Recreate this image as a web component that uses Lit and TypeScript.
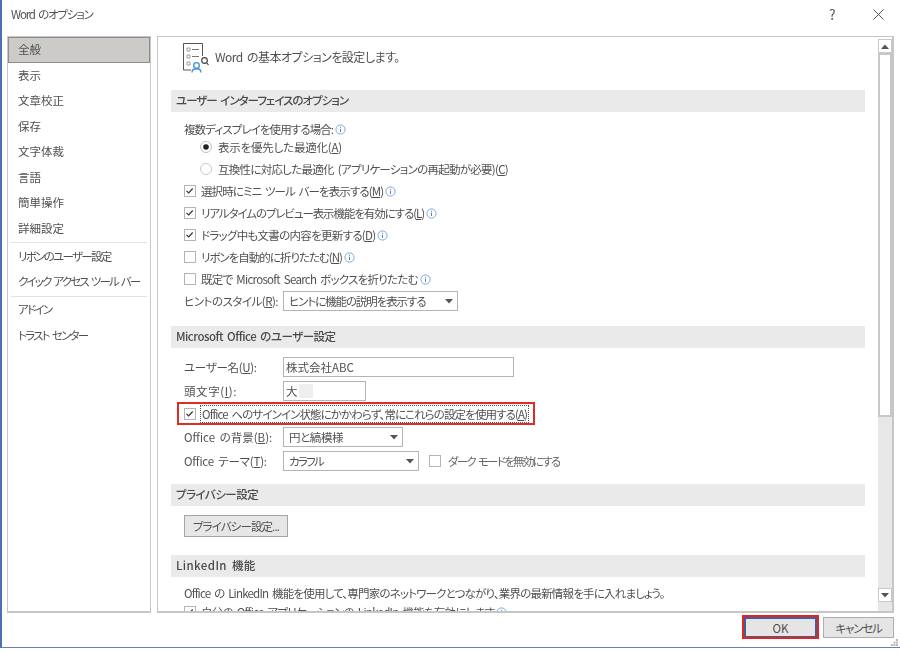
import { LitElement, html, css, svg } from "lit";
import { customElement } from "lit/decorators.js";

const info = html`<svg class="info" viewBox="0 0 11 11" width="11" height="11"><circle cx="5.5" cy="5.5" r="4.6" fill="none" stroke="#7ba7d6" stroke-width="1"/><path d="M5.5 2.800v1M5.500 4.800v3.200" stroke="#4d7fb8" stroke-width="1"/></svg>`;
const check = svg`<path d="M2.500 5.800l2.200 2.200 4-4.500" fill="none" stroke="#333" stroke-width="1.200"/>`;
const box = (on: boolean) => html`<svg class="box" viewBox="0 0 12 12" width="12" height="12"><rect x=".5" y=".5" width="11" height="11" fill="#fff" stroke="#b4b4b4"/>${on ? check : ""}</svg>`;
const caret = html`<svg class="caret" viewBox="0 0 8 5" width="8" height="5"><path d="M0 0h8L4 4.500z" fill="#555"/></svg>`;

@customElement("app-root")
export class AppRoot extends LitElement {
  static styles = css`
    :host { display: block; width: 900px; height: 653px; background: #fff; overflow: hidden; font-family: "Noto Sans CJK JP", "Liberation Sans", sans-serif; font-size: 11.5px; color: #505050; font-feature-settings: "palt" 1; word-spacing: 2px; }
    * { box-sizing: border-box; }
    .dialog { position: relative; height: 648px; border-left: 2px solid #4a72b0; border-bottom: 1.5px solid #5f82b8; display: flex; flex-direction: column; filter: blur(.25px); }
    .title { height: 36px; flex: none; display: flex; align-items: center; padding: 0 16px 0 9px; font-size: 11.5px; }
    .title .t { flex: 1; padding-bottom: 8px; }
    .help { font-size: 14px; width: 44px; padding-bottom: 8px; color: #555; }
    .close { margin-bottom: 8px; }
    .main { height: 577px; flex: none; display: flex; gap: 6px; padding-left: 5px; }
    .nav { width: 144px; border: 1px solid #c6c6c6; border-bottom-width: 2px; white-space: nowrap; }
    .nav div.item { height: 25.5px; display: flex; align-items: center; padding: 0 0 1px 10px; }
    .nav .sel { background: #cdcbc8; border: 1px solid #8d8d8d; width: 142px; padding-left: 9px !important; }
    .nav hr { border: 0; height: 1px; background: #e2e2e2; margin: 1px 3px .5px 3px; }
    .panel { width: 737px; border: 1px solid #c6c6c6; border-bottom-width: 2px; border-right-width: 2px; display: flex; overflow: hidden; }
    .content { width: 720px; flex: none; padding: 0 0 0 13px; overflow: hidden; height: 100%; }
    .head { height: 53px; display: flex; align-items: flex-start; padding: 6px 0 0 12px; gap: 6px; font-size: 12px; }
    .head span { margin-top: 5px; }
    .band { width: 694px; height: 22px; background: #eaeaea; display: flex; align-items: center; padding: 0 0 2px 5px; font-weight: 500; font-size: 11.5px; color: #4a4a4a; }
    .row { display: flex; align-items: center; padding-left: 13px; white-space: nowrap; }
    .h22 { height: 22px; } .h18 { height: 18px; }
    .row .box { margin-right: 5px; flex: none; }
    .info { margin-left: 2px; flex: none; }
    .radio { padding-left: 29px; }
    .radio svg { margin-right: 6px; flex: none; }
    .lab { width: 99px; flex: none; }
    .field { border: 1px solid #b4b4b4; height: 20px; display: flex; align-items: center; padding: 0 2px; background: #fff; justify-content: space-between; }
    .field.dd { padding: 0 4px 0 5px; }
    .field.start { justify-content: flex-start; }
    u { text-underline-offset: 1px; }
    .mask { display: inline-block; width: 14px; height: 14px; background: #efefef; margin-left: 1px; }
    .focus { outline: 1px dotted #555; padding: 0 1px; line-height: 16px; }
    .redrow { position: relative; height: 23px; margin-bottom: 1px; }
    .redbox { position: absolute; left: 6px; top: 0; width: 358px; height: 23px; border: 2px solid #e12b25; pointer-events: none; }
    .pbtn { display: flex; align-items: center; justify-content: center; width: 104px; height: 22px; border: 1px solid #a6a6a6; background: #e6e6e6; margin: 9px 0 18px 13px; font-size: 11.5px; }
    .scroll { width: 14px; flex: none; display: flex; flex-direction: column; margin-top: 2px; padding-bottom: 9px; background: #e7e7e7; }
    .sb { height: 14px; flex: none; background: #fff; border: 1px solid #c8c8c8; display: flex; align-items: center; justify-content: center; }
    .thumb { height: 364px; flex: none; background: #fff; border: 2px solid #c8c8c8; }
    .track { flex: 1; }
    .foot { flex: 1; display: flex; justify-content: flex-end; align-items: flex-start; gap: 6px; padding: 4px 6px 0 0; }
    .btn { height: 21px; display: flex; align-items: center; justify-content: center; background: #e5e5e5; border: 1px solid #adadad; font-size: 11.5px; }
    .ok { width: 73px; border: 2px solid #3b5f9f; position: relative; }
    .okred { position: absolute; inset: -4px -4px -3px -4px; border: 2px solid #e8231c; }
    .cancel { width: 71px; }
    .up { transform: rotate(180deg); }
    .grip { position: absolute; right: 2px; bottom: 1px; }
    .dark { display: inline-flex; align-items: center; margin-left: 10px; }
    .dark .lbl { margin-left: 2px; color: #666; }
    .mt-3 { margin-top: -3px; } .mt2 { margin-top: 2px; } .mt5 { margin-top: 5px; } .mt8 { margin-top: 8px; } .mt12 { margin-top: 12px; } .mt14 { margin-top: 14px; }
    .w83 { width: 83px; } .w120 { width: 120px; } .w136 { width: 136px; } .w175 { width: 175px; } .w231 { width: 231px; }
    .n2 { letter-spacing: -.2px; } .n3 { letter-spacing: -.3px; } .n4 { letter-spacing: -.4px; } .n5 { letter-spacing: -.5px; } .n6 { letter-spacing: -.6px; } .n7 { letter-spacing: -.72px; } .n8 { letter-spacing: -.8px; } .n9 { letter-spacing: -.9px; } .n10 { letter-spacing: -1px; } .n11 { letter-spacing: -1.1px; } .n12 { letter-spacing: -1.2px; } .n13 { letter-spacing: -1.3px; } .n14 { letter-spacing: -1.4px; } .n17 { letter-spacing: -1.7px; } .n18 { letter-spacing: -1.8px; }
    .p4 { letter-spacing: .4px; } .p6 { letter-spacing: .6px; }
  `;

  render() {
    return html`<div class="dialog">
      <div class="title"><span class="t n12">Word のオプション</span><span class="help">?</span>
        <svg class="close" viewBox="0 0 11 11" width="11" height="11"><path d="M.5.5l10 10M10.500.5l-10 10" stroke="#555" stroke-width="1"/></svg></div>
      <div class="main">
        <div class="nav">
          <div class="item sel">全般</div>
          <div class="item">表示</div><div class="item">文章校正</div><div class="item">保存</div><div class="item">文字体裁</div><div class="item">言語</div><div class="item">簡単操作</div><div class="item">詳細設定</div>
          <hr />
          <div class="item n17">リボンのユーザー設定</div><div class="item n18">クイック アクセス ツール バー</div>
          <hr />
          <div class="item n17">アドイン</div><div class="item n17">トラスト センター</div>
        </div>
        <div class="panel">
          <div class="content">
            <div class="head">
              <svg viewBox="0 0 26 30" width="26" height="30"><path d="M8 27H.5V.5h19V13" fill="none" stroke="#555"/><path d="M4 5h3v3H4zM4 12h3v3H4zM4 19h3v3H4z" fill="none" stroke="#888" stroke-width=".8"/><path d="M9 6.500h7M9 13.500h7" stroke="#777"/><circle cx="13.500" cy="22.500" r="2.800" fill="none" stroke="#3f8fd8" stroke-width="1.300"/><path d="M9 29.500c0-5 9-5 9 0" fill="none" stroke="#3f8fd8" stroke-width="1.300"/><circle cx="21.500" cy="17.500" r="2.800" fill="none" stroke="#444" stroke-width="1.200"/><path d="M23.500 19.500l2 2.500" stroke="#444" stroke-width="1.200"/></svg>
              <span class="n5">Word の基本オプションを設定します。</span>
            </div>
            <div class="band"><span class="n10">ユーザー インターフェイスのオプション</span></div>
            <div class="row h18 mt8"><span class="n9">複数ディスプレイを使用する場合:</span>${info}</div>
            <div class="row radio h18"><svg viewBox="0 0 12 12" width="12" height="12"><circle cx="6" cy="6" r="5.500" fill="#fff" stroke="#c0c0c0"/><circle cx="6" cy="6" r="2.800" fill="#222"/></svg><span class="n2">表示を優先した最適化(<u>A</u>)</span></div>
            <div class="row radio h22 mt2"><svg viewBox="0 0 12 12" width="12" height="12"><circle cx="6" cy="6" r="5.500" fill="#fff" stroke="#c8c8c8"/></svg><span class="n7">互換性に対応した最適化 (アプリケーションの再起動が必要)(<u>C</u>)</span></div>
            <div class="row h22">${box(true)}<span class="n9">選択時にミニ ツール バーを表示する(<u>M</u>)</span>${info}</div>
            <div class="row h22">${box(true)}<span class="n11">リアルタイムのプレビュー表示機能を有効にする(<u>L</u>)</span>${info}</div>
            <div class="row h22">${box(true)}<span class="n7">ドラッグ中も文書の内容を更新する(<u>D</u>)</span>${info}</div>
            <div class="row h22">${box(false)}<span class="n10">リボンを自動的に折りたたむ(<u>N</u>)</span>${info}</div>
            <div class="row h22">${box(false)}<span class="n7">既定で Microsoft Search ボックスを折りたたむ</span>${info}</div>
            <div class="row h22"><span class="lab n5">ヒントのスタイル(<u>R</u>):</span><div class="field dd w175"><span class="n11">ヒントに機能の説明を表示する</span>${caret}</div></div>
            <div class="band mt14"><span class="n5">Microsoft Office のユーザー設定</span></div>
            <div class="row h22 mt8"><span class="lab n3">ユーザー名(<u>U</u>):</span><div class="field w231">株式会社ABC</div></div>
            <div class="row h22 mt2"><span class="lab p6">頭文字(<u>I</u>):</span><div class="field start w83">大<span class="mask"></span></div></div>
            <div class="row redrow">${box(true)}<span class="focus n9">Office へのサインイン状態にかかわらず、常にこれらの設定を使用する(<u>A</u>)</span><div class="redbox" aria-hidden="true"></div></div>
            <div class="row h22"><span class="lab">Office の背景(<u>B</u>):</span><div class="field dd w120"><span class="n4">円と縞模様</span>${caret}</div></div>
            <div class="row h22 mt2"><span class="lab n2">Office テーマ(<u>T</u>):</span><div class="field dd w136"><span class="n17">カラフル</span>${caret}</div><span class="dark">${box(false)}<span class="lbl n17">ダーク モードを無効にする</span></span></div>
            <div class="band mt12"><span class="n5">プライバシー設定</span></div>
            <div class="pbtn"><span class="n9">プライバシー設定...</span></div>
            <div class="band"><span class="p4">LinkedIn 機能</span></div>
            <div class="row h22 mt5"><span class="n8">Office の LinkedIn 機能を使用して、専門家のネットワークとつながり、業界の最新情報を手に入れましょう。</span></div>
            <div class="row h22 mt-3">${box(true)}<span class="n7">自分の Office アプリケーションの LinkedIn 機能を有効にします</span>${info}</div>
          </div>
          <div class="scroll">
            <div class="sb"><svg class="up" viewBox="0 0 8 5" width="8" height="5"><path d="M0 0h8L4 4.500z" fill="#555"/></svg></div>
            <div class="thumb"></div>
            <div class="track"></div>
            <div class="sb">${caret}</div>
          </div>
        </div>
      </div>
      <div class="foot">
        <div class="btn ok">OK<div class="okred" aria-hidden="true"></div></div>
        <div class="btn cancel"><span class="n12">キャンセル</span></div>
      </div>
      <svg class="grip" viewBox="0 0 7 7" width="7" height="7" aria-hidden="true"><path d="M5 0h2v2H5zM2.500 2.500h2v2h-2zM5 2.500h2v2H5zM0 5h2v2H0zM2.500 5h2v2h-2zM5 5h2v2H5z" fill="#bbb"/></svg>
    </div>`;
  }
}
